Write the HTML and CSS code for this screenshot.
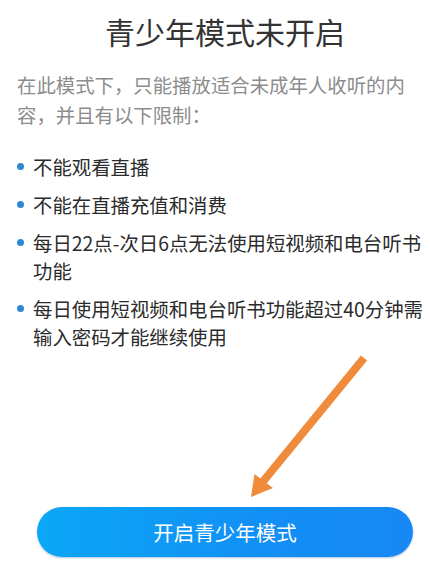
FILE: index.html
```html
<!DOCTYPE html>
<html lang="zh-CN">
<head>
<meta charset="utf-8">
<title>青少年模式未开启</title>
<link rel="stylesheet" href="styles.css">
</head>
<body>
<div class="page">
  <h1 class="title">青少年模式未开启</h1>
  <p class="intro">在此模式下，只能播放适合未成年人收听的内容，并且有以下限制：</p>
  <ul class="rules">
    <li class="rule"><span class="dot"></span><span class="rule-text">不能观看直播</span></li>
    <li class="rule"><span class="dot"></span><span class="rule-text">不能在直播充值和消费</span></li>
    <li class="rule"><span class="dot"></span><span class="rule-text">每日22点-次日6点无法使用短视频和电台听书功能</span></li>
    <li class="rule"><span class="dot"></span><span class="rule-text">每日使用短视频和电台听书功能超过40分钟需输入密码才能继续使用</span></li>
  </ul>
  <button class="cta" type="button">开启青少年模式</button>
  <svg class="arrow" width="135" height="160" viewBox="0 0 135 160" aria-hidden="true">
    <line x1="124" y1="13" x2="21" y2="139" stroke="#f08b3c" stroke-width="8" stroke-linecap="butt"/>
    <polygon points="11,152 33,143 14.5,129" fill="#f08b3c"/>
  </svg>
</div>
</body>
</html>
```

FILE: styles.css
```css
html, body {
  margin: 0;
  padding: 0;
  background: #ffffff;
}

body {
  font-family: "Noto Sans CJK SC", "Noto Sans", sans-serif;
  overflow: hidden;
}

.page {
  position: relative;
  width: 430px;
  height: 581px;
  box-sizing: border-box;
  padding: 11px 0 24px 0;
  display: flex;
  flex-direction: column;
}

.title {
  margin: 0 0 0 20px;
  font-size: 30px;
  line-height: 40px;
  font-weight: 400;
  color: #333333;
  text-align: center;
}

.intro {
  margin: 19px 16px 0 17px;
  font-size: 19.4px;
  line-height: 30px;
  color: #8c8c8c;
}

.rules {
  list-style: none;
  margin: 23px 2px 0 17px;
  padding: 0;
  display: flex;
  flex-direction: column;
  gap: 10px;
}

.rule {
  display: flex;
  align-items: flex-start;
  gap: 9px;
}

.dot {
  flex: none;
  width: 7px;
  height: 7px;
  margin-top: 10px;
  border-radius: 50%;
  background: #2f87d2;
}

.rule-text {
  font-size: 19.4px;
  line-height: 28px;
  color: #2b2b2b;
}

.cta {
  margin: auto 17px 0 37px;
  height: 50px;
  border: none;
  border-radius: 25px;
  background: linear-gradient(90deg, #0ba7f6 0%, #128ff6 60%, #1788f5 100%);
  box-shadow: 0 1px 2px rgba(20, 90, 160, 0.35);
  color: #ffffff;
  font-family: "Noto Sans CJK SC", "Noto Sans", sans-serif;
  font-size: 20.5px;
  line-height: 50px;
  padding: 0;
}

.arrow {
  position: absolute;
  left: 240px;
  top: 345px;
}
```
